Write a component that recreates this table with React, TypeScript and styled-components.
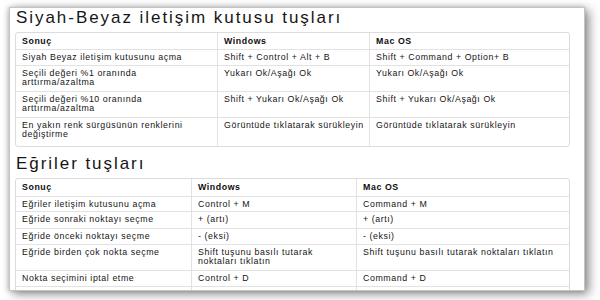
import { FC } from 'react'
import styled, { createGlobalStyle } from 'styled-components'

const GlobalStyle = createGlobalStyle`
  html, body {
    margin: 0;
    padding: 0;
    background: #ffffff;
  }
  body {
    font-family: "Liberation Sans", Arial, Helvetica, sans-serif;
    color: #222222;
  }
`

interface TableRow {
  cells: string[]
  height: number
}

interface Section {
  title: string
  columns: number[]
  headerHeight: number
  rows: TableRow[]
}

const sections: Section[] = [
  {
    title: 'Siyah-Beyaz iletişim kutusu tuşları',
    columns: [201, 152, 200],
    headerHeight: 16,
    rows: [
      {
        cells: ['Siyah Beyaz iletişim kutusunu açma', 'Shift + Control + Alt + B', 'Shift + Command + Option+ B'],
        height: 16,
      },
      {
        cells: ['Seçili değeri %1 oranında\narttırma/azaltma', 'Yukarı Ok/Aşağı Ok', 'Yukarı Ok/Aşağı Ok'],
        height: 26,
      },
      {
        cells: ['Seçili değeri %10 oranında\narttırma/azaltma', 'Shift + Yukarı Ok/Aşağı Ok', 'Shift + Yukarı Ok/Aşağı Ok'],
        height: 26,
      },
      {
        cells: ['En yakın renk sürgüsünün renklerini\ndeğiştirme', 'Görüntüde tıklatarak sürükleyin', 'Görüntüde tıklatarak sürükleyin'],
        height: 29,
      },
    ],
  },
  {
    title: 'Eğriler tuşları',
    columns: [175, 165, 213],
    headerHeight: 17,
    rows: [
      { cells: ['Eğriler iletişim kutusunu açma', 'Control + M', 'Command + M'], height: 15 },
      { cells: ['Eğride sonraki noktayı seçme', '+ (artı)', '+ (artı)'], height: 17 },
      { cells: ['Eğride önceki noktayı seçme', '- (eksi)', '- (eksi)'], height: 16 },
      {
        cells: ['Eğride birden çok nokta seçme', 'Shift tuşunu basılı tutarak\nnoktaları tıklatın', 'Shift tuşunu basılı tutarak noktaları tıklatın'],
        height: 26,
      },
      { cells: ['Nokta seçimini iptal etme', 'Control + D', 'Command + D'], height: 16 },
      { cells: ['', '', ''], height: 16 },
    ],
  },
]

const headers = ['Sonuç', 'Windows', 'Mac OS']

// ekran görüntüsü kartın alt kısmında kesiliyor
export const ShortcutTable: FC<Section> = ({ title, columns, headerHeight, rows }) => {
  const template = columns.map((c) => `${c}px`).join(' ')
  return (
    <>
      <Title>{title}</Title>
      <TableBox>
        <Row columns={template} rowHeight={headerHeight} first>
          {headers.map((h) => (
            <HeadCell key={h}>{h}</HeadCell>
          ))}
        </Row>
        {rows.map((row, i) => (
          <Row key={i} columns={template} rowHeight={row.height}>
            {row.cells.map((c, j) => (
              <Cell key={j}>{c}</Cell>
            ))}
          </Row>
        ))}
      </TableBox>
    </>
  )
}

export default function App() {
  return (
    <>
      <GlobalStyle />
      <Page>
        <Card>
          {sections.map((s) => (
            <ShortcutTable key={s.title} {...s} />
          ))}
        </Card>
      </Page>
    </>
  )
}

const Page = styled.div`
  width: 600px;
  height: 300px;
  box-sizing: border-box;
  padding: 7px 0 0 9px;
  overflow: hidden;
`

const Card = styled.div`
  width: 576px;
  height: 284px;
  box-sizing: border-box;
  border: 1px solid #c4c4c4;
  background: #ffffff;
  box-shadow: 4px 3px 10px rgba(0, 0, 0, 0.45), -1px 0 5px rgba(0, 0, 0, 0.2);
  padding: 0 0 0 5px;
  overflow: hidden;
  display: flex;
  flex-direction: column;
`

const Title = styled.h2`
  margin: 0;
  padding: 0 0 0 1px;
  font-size: 17px;
  line-height: 20px;
  font-weight: normal;
  letter-spacing: 1.95px;
  color: #161616;
  white-space: nowrap;

  & + div {
    margin-top: 4px;
  }

  &:not(:first-child) {
    margin-top: 7px;
  }
`

const TableBox = styled.div`
  width: 555px;
  box-sizing: border-box;
  border: 1px solid #dcdcdc;
  border-radius: 3px;
  flex-shrink: 0;
  overflow: hidden;
`

const Row = styled.div<{ columns: string; rowHeight: number; first?: boolean }>`
  display: grid;
  grid-template-columns: ${(props) => props.columns};
  height: ${(props) => props.rowHeight}px;
  box-sizing: border-box;
  border-top: ${(props) => (props.first ? 'none' : '1px solid #e2e2e2')};
`

const Cell = styled.div`
  padding: 3px 2px 0 6px;
  font-size: 8.8px;
  line-height: 9px;
  letter-spacing: 0.58px;
  color: #141414;
  white-space: pre-line;
  overflow: hidden;

  & + & {
    border-left: 1px solid #e2e2e2;
  }
`

const HeadCell = styled(Cell)`
  font-weight: bold;
  padding-top: 3.5px;
  color: #0e0e0e;
`
